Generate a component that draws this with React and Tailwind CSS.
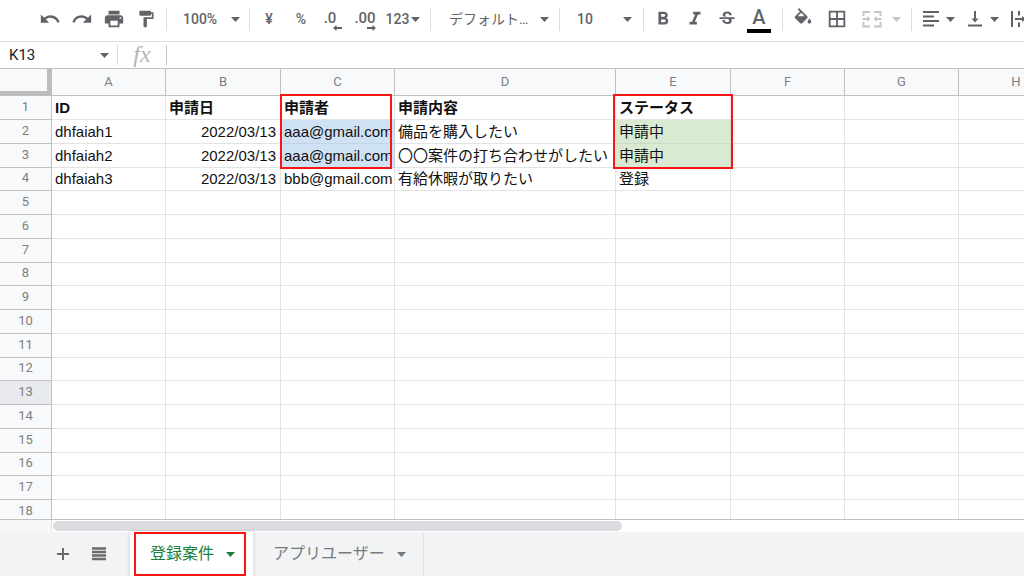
import { useState } from 'react';
import clsx from 'clsx';
import {
  MdUndo,
  MdRedo,
  MdPrint,
  MdFormatPaint,
  MdFormatBold,
  MdFormatItalic,
  MdStrikethroughS,
  MdBorderAll,
} from 'react-icons/md';

const columns = [
  { name: 'A', width: 'w-[114px]' },
  { name: 'B', width: 'w-[115px]' },
  { name: 'C', width: 'w-[114px]' },
  { name: 'D', width: 'w-[221px]' },
  { name: 'E', width: 'w-[115px]' },
  { name: 'F', width: 'w-[114px]' },
  { name: 'G', width: 'w-[114px]' },
  { name: 'H', width: 'w-[115px]' },
];

const data = [
  ['ID', '申請日', '申請者', '申請内容', 'ステータス'],
  ['dhfaiah1', '2022/03/13', 'aaa@gmail.com', '備品を購入したい', '申請中'],
  ['dhfaiah2', '2022/03/13', 'aaa@gmail.com', '〇〇案件の打ち合わせがしたい', '申請中'],
  ['dhfaiah3', '2022/03/13', 'bbb@gmail.com', '有給休暇が取りたい', '登録'],
];

const rows = Array.from({ length: 18 }, (_, i) => i + 1);

function Caret({ className }) {
  return (
    <svg viewBox="0 0 9 5" className={clsx('h-[5px] w-[9px] shrink-0', className)} fill="currentColor">
      <path d="M0 0h9L4.500 5z" />
    </svg>
  );
}

function Separator({ className }) {
  return <div className={clsx('mr-[3px] h-[23px] w-px shrink-0 bg-[#dadce0]', className || 'ml-1')} />;
}

function ToolButton({ label, className, children }) {
  return (
    <button
      type="button"
      aria-label={label}
      className={clsx('flex h-8 shrink-0 items-center justify-center', className || 'w-8')}
    >
      {children}
    </button>
  );
}

function ToolSelect({ label, value, className, caretClass }) {
  return (
    <label className={clsx('relative flex h-8 shrink-0 items-center', className)}>
      <select aria-label={label} className="w-full appearance-none bg-transparent outline-none">
        <option>{value}</option>
      </select>
      <Caret className={clsx('pointer-events-none absolute', caretClass)} />
    </label>
  );
}

function ArrowMark({ flip }) {
  return (
    <svg viewBox="0 0 9 6" className={clsx('absolute right-0 bottom-0 h-[6px] w-[9px]', flip && 'rotate-180')}>
      <path d="M0 3l3.500-3v2H9v2H3.500v2z" fill="currentColor" />
    </svg>
  );
}

function FillIcon() {
  return (
    <svg viewBox="0 0 24 24" className="size-[22px]" fill="currentColor">
      <path d="M16.560 8.940L7.620 0 6.210 1.410l2.380 2.380-5.150 5.150a1.490 1.490 0 0 0 0 2.120l5.500 5.500c.29.29.68.44 1.060.44s.77-.15 1.060-.44l5.500-5.500c.59-.58.59-1.530 0-2.120zM6.200 9L10 5.210 13.800 9zM19 11.500s-2 2.170-2 3.500c0 1.100.9 2 2 2s2-.9 2-2c0-1.330-2-3.500-2-3.500z" />
    </svg>
  );
}

function MergeIcon() {
  return (
    <svg viewBox="0 0 22 22" className="size-[22px]" fill="none" stroke="currentColor" strokeWidth="2">
      <path d="M2.500 8V4H9M13 4h6.500v4M2.500 14v4.500H9M13 18.500h6.500V14" />
      <path d="M1.500 11H6M20.500 11H16" />
      <path d="M6 8l3.500 3L6 14zM16 8l-3.500 3 3.500 3z" fill="currentColor" stroke="none" />
    </svg>
  );
}

function AlignLeftIcon() {
  return (
    <svg viewBox="0 0 22 22" className="size-[22px]" stroke="currentColor" strokeWidth="2">
      <path d="M3 4h16M3 8.500h11M3 13h16M3 17.500h11" />
    </svg>
  );
}

function AlignBottomIcon() {
  return (
    <svg viewBox="0 0 22 22" className="size-[22px]" stroke="currentColor" strokeWidth="2">
      <path d="M11 3v9M4 17.500h14" />
      <path d="M7.500 10.500h7L11 14.500z" fill="currentColor" stroke="none" />
    </svg>
  );
}

function WrapIcon() {
  return (
    <svg viewBox="0 0 22 22" className="size-[22px]" fill="none" stroke="currentColor" strokeWidth="2">
      <path d="M4 3v16M18 3v16M11 3v4.500M11 14.500V19M7 11h9" />
      <path d="M14 8l4 3-4 3z" fill="currentColor" stroke="none" />
    </svg>
  );
}

function Toolbar() {
  return (
    <div className="flex h-[42px] shrink-0 items-center overflow-hidden border-b border-[#e0e0e0] pb-[3px] pl-[34px] font-[Roboto,'Noto_Sans_CJK_JP',sans-serif] text-sm font-medium text-[#5f6368]">
      <ToolButton label="元に戻す"><MdUndo size={22} /></ToolButton>
      <ToolButton label="やり直し"><MdRedo size={22} /></ToolButton>
      <ToolButton label="印刷"><MdPrint size={22} /></ToolButton>
      <ToolButton label="書式を貼り付け"><MdFormatPaint size={20} /></ToolButton>
      <Separator />
      <ToolSelect label="ズーム" value="100%" className="w-[76px] pl-[13px]" caretClass="right-[6px]" />
      <Separator className="ml-[3px]" />
      <ToolButton label="通貨">¥</ToolButton>
      <ToolButton label="パーセント">%</ToolButton>
      <ToolButton label="小数点以下の桁数を減らす">
        <span className="relative pr-[6px] pb-[3px] text-[15px] leading-5">.0<ArrowMark /></span>
      </ToolButton>
      <ToolButton label="小数点以下の桁数を増やす">
        <span className="relative pb-[3px] text-[15px] leading-5">.00<ArrowMark flip /></span>
      </ToolButton>
      <ToolButton label="表示形式の詳細設定" className="w-11 gap-[2px]">
        123
        <Caret />
      </ToolButton>
      <Separator className="ml-[5px]" />
      <ToolSelect label="フォント" value="デフォルト…" className="w-[122px] pl-[15px] font-normal" caretClass="right-[7px]" />
      <Separator className="ml-[3px]" />
      <ToolSelect label="フォントサイズ" value="10" className="w-[75px] pl-[14px]" caretClass="right-[6px]" />
      <Separator className="ml-[5px]" />
      <ToolButton label="太字"><MdFormatBold size={22} /></ToolButton>
      <ToolButton label="斜体"><MdFormatItalic size={22} /></ToolButton>
      <ToolButton label="取り消し線"><MdStrikethroughS size={20} /></ToolButton>
      <ToolButton label="テキストの色">
        <span className="flex flex-col items-center gap-[2px] pt-px">
          <span className="text-xl leading-5">A</span>
          <span className="h-1 w-6 bg-black" />
        </span>
      </ToolButton>
      <Separator className="ml-[7px]" />
      <ToolButton label="塗りつぶしの色" className="w-[34px]"><FillIcon /></ToolButton>
      <ToolButton label="枠線" className="w-[34px]"><MdBorderAll size={22} /></ToolButton>
      <ToolButton label="セルを結合" className="w-[50px] gap-[9px] pl-1 text-[#c4c6c8]">
        <MergeIcon />
        <Caret />
      </ToolButton>
      <Separator className="ml-[7px]" />
      <ToolButton label="水平方向の配置" className="w-11 gap-1">
        <AlignLeftIcon />
        <Caret />
      </ToolButton>
      <ToolButton label="垂直方向の配置" className="w-11 gap-1">
        <AlignBottomIcon />
        <Caret />
      </ToolButton>
      <ToolButton label="テキストを折り返す" className="w-11 gap-1">
        <WrapIcon />
        <Caret />
      </ToolButton>
    </div>
  );
}

function FormulaBar() {
  const [cell, setCell] = useState('K13');
  const [formula, setFormula] = useState('');

  return (
    <div className="flex h-[26px] shrink-0 items-center font-[Roboto,sans-serif] text-[15px] text-[#202124]">
      <input
        aria-label="名前ボックス"
        value={cell}
        onChange={(e) => setCell(e.target.value)}
        className="w-[100px] pl-[9px] outline-none"
      />
      <button type="button" aria-label="名前付き範囲" className="flex h-6 w-[17px] items-center text-[#5f6368]">
        <Caret />
      </button>
      <div className="h-5 w-px bg-[#dadce0]" />
      <span className="w-12 pb-[3px] text-center font-['Liberation_Serif',serif] text-2xl leading-6 text-[#b4b4b4] italic">fx</span>
      <div className="h-5 w-px bg-[#c6c6c6]" />
      <input
        aria-label="数式バー"
        value={formula}
        onChange={(e) => setFormula(e.target.value)}
        className="min-w-0 flex-1 px-2 outline-none"
      />
    </div>
  );
}

function cellColor(row, col) {
  if (row !== 2 && row !== 3) return 'border-[#e2e3e3]';
  if (col === 2) return 'bg-[#cfe2f3] border-[#c3d5e5]';
  if (col === 4) return 'bg-[#d9ead3] border-[#cbdcc6]';
  return 'border-[#e2e3e3]';
}

function Sheet() {
  return (
    <div className="relative min-h-0 flex-1 overflow-hidden border-y border-[#c0c0c0]">
      <table className="w-[1074px] table-fixed border-separate border-spacing-0 font-['Liberation_Sans','Noto_Sans_CJK_JP',sans-serif] text-[15px]">
        <thead>
          <tr className="h-[27px] bg-[#f8f9fa] font-[Roboto,sans-serif] text-[13px] leading-4 text-[#7d7f82]">
            <th aria-label="すべて選択" className="w-[52px] border-r-[5px] border-b-[5px] border-[#bdbdbd] p-0" />
            {columns.map((column) => (
              <th key={column.name} className={clsx('border-r border-b border-[#c0c0c0] p-0 font-normal', column.width)}>
                {column.name}
              </th>
            ))}
          </tr>
        </thead>
        <tbody>
          {rows.map((row) => (
            <tr key={row} className={row % 4 === 0 ? 'h-[23px]' : 'h-6'}>
              <th
                className={clsx(
                  'border-r border-b border-[#c0c0c0] px-0 pt-0 pb-[2px] font-[Roboto,sans-serif] text-[13px] leading-4 font-normal text-[#7d7f82]',
                  row === 13 ? 'bg-[#e8eaed]' : 'bg-[#f8f9fa]'
                )}
              >
                {row}
              </th>
              {columns.map((column, col) => (
                <td
                  key={column.name}
                  className={clsx(
                    'border-r border-b py-0 pr-1 pl-[3px] leading-[22px] whitespace-nowrap text-[#111111]',
                    row === 1 && 'font-bold',
                    row > 1 && col === 1 && 'text-right',
                    cellColor(row, col)
                  )}
                >
                  {data[row - 1]?.[col]}
                </td>
              ))}
            </tr>
          ))}
        </tbody>
      </table>

      {/* 強調枠 */}
      <div className="absolute top-[25px] left-[280px] h-[75px] w-[112px] border-2 border-[#fa1414]" />
      <div className="absolute top-[25px] left-[613px] h-[75px] w-[120px] border-2 border-[#fa1414]" />
    </div>
  );
}

function SheetTabs() {
  return (
    <div className="flex h-11 shrink-0 bg-[#f1f3f4] font-[Roboto,'Noto_Sans_CJK_JP',sans-serif] text-base">
      <div className="flex w-[130px] items-center gap-3 pl-[51px] text-[#6b6b6b]">
        <button type="button" aria-label="シートを追加" className="flex size-6 items-center justify-center">
          <svg viewBox="0 0 12 12" className="size-3" stroke="currentColor" strokeWidth="2">
            <path d="M6 0v12M0 6h12" />
          </svg>
        </button>
        <button type="button" aria-label="すべてのシート" className="flex size-6 items-center justify-center">
          <svg viewBox="0 0 14 14" className="size-[14px]" stroke="currentColor" strokeWidth="2.500">
            <path d="M0 1.500h14M0 5h14M0 8.500h14M0 12h14" />
          </svg>
        </button>
      </div>
      <div className="flex w-[123px] bg-white px-1 shadow-[0_0_4px_rgba(60,64,67,0.2)]">
        <button
          type="button"
          className="flex w-[112px] items-center gap-3 border-2 border-[#fa1414] pl-[14px] whitespace-nowrap text-[#188038]"
        >
          登録案件
          <Caret />
        </button>
      </div>
      <button
        type="button"
        className="flex w-[171px] items-center gap-3 border-r border-[#e3e5e8] pl-5 whitespace-nowrap text-[#757a7f]"
      >
        アプリユーザー
        <Caret />
      </button>
    </div>
  );
}

export default function App() {
  return (
    <div className="flex h-screen flex-col overflow-hidden bg-white">
      <Toolbar />
      <FormulaBar />
      <Sheet />
      <div className="flex h-3 shrink-0">
        <div className="w-[52px] border-r border-[#e2e3e3] bg-[#f8f8f8]" />
        <div className="mt-px ml-px h-[10px] w-[569px] rounded-full bg-[#dadce0]" />
      </div>
      <SheetTabs />
    </div>
  );
}
